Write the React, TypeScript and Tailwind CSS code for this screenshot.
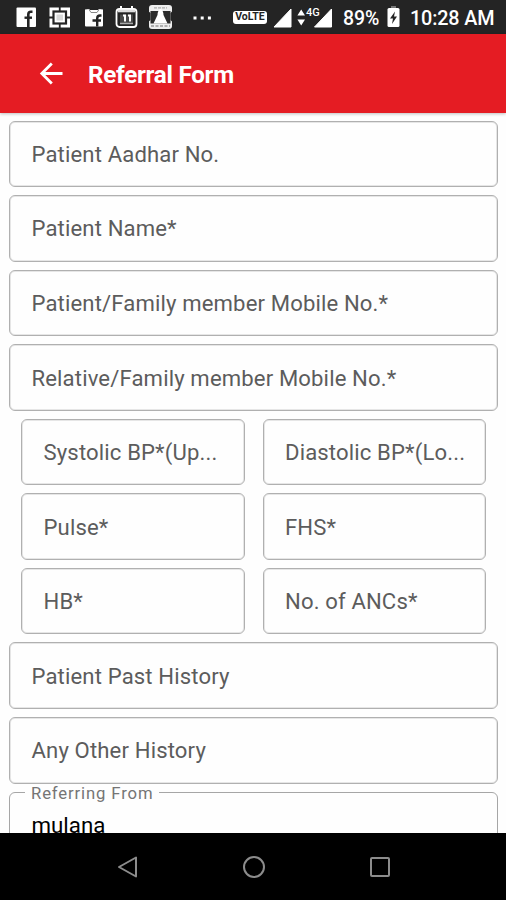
import type { ReactNode } from "react";
import clsx from "clsx";

const historyFields = ["Patient Past History", "Any Other History"];

const contactFields = [
  "Patient Aadhar No.",
  "Patient Name*",
  "Patient/Family member Mobile No.*",
  "Relative/Family member Mobile No.*",
];

// the BP labels are shortened to fit half a row
const vitals = ["Systolic BP*(Up...", "Diastolic BP*(Lo...", "Pulse*", "FHS*", "HB*", "No. of ANCs*"];

function Field({ label, className }: { label: string; className?: string }) {
  return (
    <div
      className={clsx(
        "flex h-[66.55px] shrink-0 items-center rounded-[6px] border border-[#b0b0b0] pl-[21.5px] shadow-[inset_0_0_0_1px_#e6e6e6]",
        className
      )}
    >
      <span className="whitespace-nowrap text-[22.1px] leading-7 tracking-[0.14px] text-[#5c5c5c]">{label}</span>
    </div>
  );
}

function Icon({ width, className, children }: { width: number; className?: string; children: ReactNode }) {
  return (
    <svg width={width} height={24} viewBox={`0 0 ${width} 24`} fill="none" className={clsx("shrink-0", className)}>
      {children}
    </svg>
  );
}

function StatusBar() {
  return (
    <div className="flex h-[34px] shrink-0 items-center bg-[#242424] pl-4 text-white">
      {/* facebook */}
      <Icon width={20}>
        <rect x="0.500" y="2.500" width="19.500" height="19.500" rx="1" fill="#fff" />
        <path stroke="#242424" strokeWidth="2.600" d="M16.500 6.800H15c-1.800 0-2.700.9-2.700 2.700V22" />
        <path stroke="#242424" strokeWidth="2.400" d="M8.500 12.700h7.500" />
      </Icon>
      {/* framed target */}
      <Icon width={22} className="ml-[13px]">
        <rect x="0.500" y="2.500" width="20.500" height="20" fill="#fff" />
        <rect x="4.500" y="6.500" width="12.500" height="12" stroke="#242424" strokeWidth="2.200" />
        <rect x="7.500" y="9.500" width="6.500" height="6" fill="#d8d8d8" />
        <path stroke="#242424" strokeWidth="1.800" d="M10.750 2v4M10.750 19v4M0 12.500h4M17.500 12.500h4" />
      </Icon>
      {/* store bag with f */}
      <Icon width={20} className="ml-[13px]">
        <path fill="#fff" d="M1 4.500l4-.5 1 1h8l1-1 4 .500v16a1 1 0 0 1-1 1H2a1 1 0 0 1-1-1z" />
        <path stroke="#888" strokeWidth="1" d="M5 4.500l2 3h6l2-3" />
        <path stroke="#242424" strokeWidth="2.400" d="M17.500 10.500h-1.500c-2 0-2.800 1-2.800 3v8M8.500 15.500H17" />
      </Icon>
      {/* calendar */}
      <Icon width={23} className="ml-[11px]">
        <rect x="1.500" y="4" width="20" height="18" rx="3" stroke="#fff" strokeWidth="1.800" />
        <path stroke="#fff" strokeWidth="2" d="M6 1v4M17 1v4" />
        <path stroke="#ddd" strokeWidth="2.600" d="M3 6h17" />
        <rect x="5" y="9.500" width="13" height="9.500" fill="#484848" />
        <path stroke="#fff" strokeWidth="2" d="M8 10.500h2v6M13 10.500h2v6" />
        <path stroke="#aaa" strokeWidth="1.500" d="M5 18.500h13" />
      </Icon>
      {/* monument badge */}
      <Icon width={26} className="ml-[9px]">
        <rect x="2" y="0" width="23" height="24" rx="3" fill="#eee" />
        <rect x="3.500" y="6" width="20" height="12.500" fill="#2a2a2a" />
        <path fill="#fff" d="M13.500 3.500c2 1.500 3 3.500 3 6.500l4 8.500h-14l4-8.500c0-3 1-5 3-6.500z" />
        <path stroke="#aaa" strokeWidth="1.200" strokeDasharray="3 1" d="M7 2.800h13" />
        <path stroke="#999" strokeWidth="1.300" strokeDasharray="3 1.500" d="M4 21h19" />
        <path fill="#242424" d="M0 5l3.500 3v7L0 18zM26.500 5l-3 3v7l3 3z" />
      </Icon>
      <Icon width={20} className="ml-[19px]">
        <path fill="#fff" d="M1.500 11.500h3v3h-3zM8.700 11.500h3v3h-3zM15.900 11.500h3v3h-3z" />
      </Icon>
      <span className="ml-[21px] flex h-[13px] w-[34px] shrink-0 items-center justify-center rounded-[3px] bg-white text-[10.500px] font-bold leading-none text-[#242424]">
        VoLTE
      </span>
      <Icon width={20} className="ml-1.5">
        <path fill="#fff" stroke="#fff" strokeLinejoin="round" d="M18 4v18H1z" />
      </Icon>
      <div className="relative ml-1 h-6 w-[37px] shrink-0">
        <Icon width={37}>
          <path fill="#fff" d="M4.200 4.500l3.800 6H.4zM4.200 20.500l3.800-6H.4z" />
          <path fill="#fff" stroke="#fff" strokeLinejoin="round" d="M34.500 4v18H17.500z" />
        </Icon>
        <span className="absolute left-[9px] top-[3px] bg-[#242424] text-[11px] font-medium leading-[10px]">4G</span>
      </div>
      <span className="ml-[9px] w-[38px] shrink-0 whitespace-nowrap pt-[3px] text-[19.500px] font-medium leading-none tracking-[-0.100px]">
        89%
      </span>
      <Icon width={13} className="ml-[6px]">
        <path fill="#777" d="M4 1h5v3H4z" />
        <rect x="0.500" y="3" width="12" height="19" rx="1.500" fill="#fff" />
        <path fill="#242424" d="M8 6.500L3 13.500h3L5 19l5-7.500H7z" />
      </Icon>
      <span className="ml-[10px] shrink-0 whitespace-nowrap pt-[3px] text-[19.800px] font-medium leading-none tracking-[-0.150px]">
        10:28 AM
      </span>
    </div>
  );
}

export default function App() {
  return (
    <div className="flex h-[900px] w-[506px] flex-col overflow-hidden bg-white font-['Roboto',sans-serif]">
      <StatusBar />

      <header className="z-10 flex h-[79px] shrink-0 items-center bg-[#e51c23] pl-[39px] text-white shadow-[0_1px_3px_rgba(0,0,0,0.25)]">
        <svg width="24" height="24" viewBox="0 0 24 24" fill="none" stroke="#fff" strokeWidth="2.800">
          <path d="M23.500 11.500H2.500M12.800 1.500L2.800 11.500l10 10" />
        </svg>
        <h1 className="ml-[25px] pt-[2px] text-[24.200px] font-bold leading-7 tracking-[-0.250px]">Referral Form</h1>
      </header>

      <main className="flex min-h-0 flex-1 flex-col gap-2 overflow-hidden bg-[#fefefe] px-[9px] pt-[7.600px] pr-[8px]">
        {contactFields.map(label => (
          <Field key={label} label={label} />
        ))}
        <div className="grid shrink-0 grid-cols-2 gap-x-[18px] gap-y-2 px-[12px]">
          {vitals.map(label => (
            <Field key={label} label={label} />
          ))}
        </div>
        {historyFields.map(label => (
          <Field key={label} label={label} />
        ))}
        <div className="relative flex h-[66.55px] shrink-0 items-center rounded-[6px] border border-[#a6a6a6] pl-[21.5px]">
          <span className="absolute -top-[9px] left-[15px] whitespace-nowrap bg-[#fefefe] px-[6px] text-[16.700px] leading-[20px] tracking-[0.860px] text-[#757575]">
            Referring From
          </span>
          <span className="text-[22.300px] leading-7 text-black">mulana</span>
        </div>
      </main>

      <nav className="flex h-[67px] shrink-0 items-center justify-center gap-[102px] bg-black pl-px">
        <svg width="24" height="24" viewBox="0 0 24 24" fill="none" stroke="#8c8c8c" strokeWidth="2">
          <path d="M20 2.500v19L3 12z" strokeLinejoin="round" />
        </svg>
        <svg width="24" height="24" viewBox="0 0 24 24" fill="none" stroke="#8c8c8c" strokeWidth="2">
          <circle cx="12" cy="12" r="10" />
        </svg>
        <svg width="24" height="24" viewBox="0 0 24 24" fill="none" stroke="#8c8c8c" strokeWidth="2">
          <rect x="3" y="3" width="18" height="18" rx="1" />
        </svg>
      </nav>
    </div>
  );
}
